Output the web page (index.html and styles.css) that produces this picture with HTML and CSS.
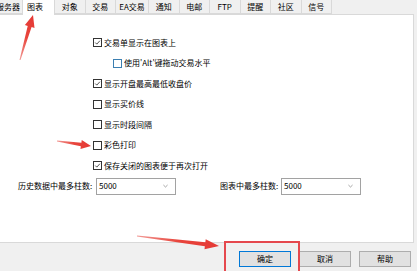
FILE: index.html
```html
<!DOCTYPE html>
<html lang="zh">
<head>
<meta charset="utf-8">
<link rel="stylesheet" href="styles.css">
</head>
<body>
<div class="window">
  <div class="tabs">
    <div class="tab tab-first">服务器</div>
    <div class="tab tab-active">图表</div>
    <div class="tab">对象</div>
    <div class="tab">交易</div>
    <div class="tab tab-wide">EA交易</div>
    <div class="tab">通知</div>
    <div class="tab">电邮</div>
    <div class="tab">FTP</div>
    <div class="tab">提醒</div>
    <div class="tab">社区</div>
    <div class="tab">信号</div>
  </div>
  <div class="panel">
    <div class="row"><span class="cb checked"><svg viewBox="0 0 9 9"><path d="M1.6 4.6 L3.6 6.6 L7.6 2.2" /></svg></span><span class="lbl">交易单显示在图表上</span></div>
    <div class="row row-indent"><span class="cb cb-focus"></span><span class="lbl">使用'Alt'键拖动交易水平</span></div>
    <div class="row"><span class="cb checked"><svg viewBox="0 0 9 9"><path d="M1.6 4.6 L3.6 6.6 L7.6 2.2" /></svg></span><span class="lbl">显示开盘最高最低收盘价</span></div>
    <div class="row"><span class="cb"></span><span class="lbl">显示买价线</span></div>
    <div class="row"><span class="cb"></span><span class="lbl">显示时段间隔</span></div>
    <div class="row"><span class="cb"></span><span class="lbl">彩色打印</span></div>
    <div class="row"><span class="cb checked"><svg viewBox="0 0 9 9"><path d="M1.6 4.6 L3.6 6.6 L7.6 2.2" /></svg></span><span class="lbl">保存关闭的图表便于再次打开</span></div>
    <div class="row row-fields">
      <span class="field-lbl">历史数据中最多柱数:</span>
      <div class="combo"><span>5000</span><svg class="chev" viewBox="0 0 6 4"><path d="M0.5 0.8 L3 3.2 L5.5 0.8"/></svg></div>
      <span class="field-lbl field-lbl2">图表中最多柱数:</span>
      <div class="combo"><span>5000</span><svg class="chev" viewBox="0 0 6 4"><path d="M0.5 0.8 L3 3.2 L5.5 0.8"/></svg></div>
    </div>
  </div>
  <div class="footer">
    <div class="btn btn-default">确定</div>
    <div class="btn">取消</div>
    <div class="btn">帮助</div>
  </div>
  <svg class="annot" viewBox="0 0 417 271" width="417" height="271">
    <defs>
      <linearGradient id="g1" gradientUnits="userSpaceOnUse" x1="20" y1="60" x2="33" y2="15">
        <stop offset="0" stop-color="#f29a96"/><stop offset="0.5" stop-color="#e8453c"/><stop offset="1" stop-color="#e53935"/>
      </linearGradient>
      <linearGradient id="g2" gradientUnits="userSpaceOnUse" x1="57" y1="141" x2="91" y2="146">
        <stop offset="0" stop-color="#f29a96"/><stop offset="0.5" stop-color="#e8453c"/><stop offset="1" stop-color="#e53935"/>
      </linearGradient>
      <linearGradient id="g3" gradientUnits="userSpaceOnUse" x1="137" y1="236" x2="219" y2="246">
        <stop offset="0" stop-color="#f29a96"/><stop offset="0.5" stop-color="#e8453c"/><stop offset="1" stop-color="#e53935"/>
      </linearGradient>
    </defs>
    <polygon fill="url(#g1)" points="20.5,60.1 31.6,27.1 34.5,27.9 33,15 24.9,25.1 27.7,25.9 19.5,59.9"/>
    <polygon fill="url(#g2)" points="56.94,141.4 80.84,146.33 80.45,149.0 91,146 81.75,140.1 81.36,142.77 57.06,140.6"/>
    <polygon fill="url(#g3)" points="136.94,236.5 204.86,246.29 204.5,249.3 219,246 205.7,239.3 205.34,242.31 137.06,235.5"/>
    <rect x="225" y="242" width="74" height="40" fill="none" stroke="#e5484d" stroke-width="2"/>
  </svg>
</div>
</body>
</html>
```

FILE: styles.css
```css
html, body {
  margin: 0;
  padding: 0;
}
body {
  width: 417px;
  height: 271px;
  overflow: hidden;
  background: #f0f0f0;
  font-family: "Noto Sans CJK SC", "Noto Sans", sans-serif;
  font-size: 8px;
  color: #000;
}
.window {
  position: relative;
  width: 417px;
  height: 271px;
  display: flex;
  flex-direction: column;
}
.tabs {
  display: flex;
  align-items: flex-start;
  height: 14px;
  position: relative;
  z-index: 2;
}
.tab {
  box-sizing: border-box;
  width: 30.5px;
  height: 14px;
  border: 1px solid #d9d9d9;
  border-left: none;
  border-top: none;
  background: #f0f0f0;
  display: flex;
  align-items: center;
  justify-content: center;
  line-height: 1;
  white-space: nowrap;
  flex: none;
}
.tab-first {
  width: 31px;
  margin-left: -8px;
  justify-content: flex-end;
  padding-right: 2px;
}
.tab-wide {
  width: 33px;
}
.tab-active {
  width: 32px;
  height: 15px;
  background: #fff;
  border-left: none;
  border-right: 1px solid #d9d9d9;
  border-bottom: none;
  justify-content: flex-start;
  padding-left: 4px;
  padding-bottom: 1px;
}
.panel {
  box-sizing: border-box;
  margin-left: -1px;
  width: 415px;
  height: 229px;
  background: #fff;
  border: 1px solid #d9d9d9;
  padding-top: 17.5px;
  padding-left: 93px;
  display: flex;
  flex-direction: column;
}
.row {
  height: 20.5px;
  display: flex;
  align-items: center;
  flex: none;
}
.row-indent {
  padding-left: 20px;
}
.cb {
  box-sizing: border-box;
  width: 9px;
  height: 9px;
  border: 1px solid #333;
  background: #fff;
  flex: none;
  display: flex;
}
.cb svg {
  width: 7px;
  height: 7px;
  fill: none;
  stroke: #222;
  stroke-width: 1;
}
.cb-focus {
  border-color: #3c7fb1;
}
.lbl {
  margin-left: 2px;
  line-height: 1;
  white-space: nowrap;
}
.row-fields {
  margin-left: -75px;
  height: 20.5px;
}
.field-lbl {
  line-height: 1;
  white-space: nowrap;
  width: 78px;
  flex: none;
}
.field-lbl2 {
  margin-left: 44px;
  width: 61px;
}
.combo {
  box-sizing: border-box;
  width: 80px;
  height: 17px;
  border: 1px solid #a2a2a2;
  background: #fff;
  display: flex;
  align-items: center;
  justify-content: space-between;
  padding: 0 7px 0 2px;
  line-height: 1;
  flex: none;
}
.chev {
  width: 5px;
  height: 4px;
  fill: none;
  stroke: #777;
  stroke-width: 0.8;
}
.footer {
  flex: 1;
  display: flex;
  justify-content: flex-end;
  align-items: flex-start;
  padding-top: 8px;
  padding-right: 6px;
  gap: 8px;
}
.btn {
  box-sizing: border-box;
  width: 52px;
  height: 16px;
  background: #e1e1e1;
  border: 1px solid #adadad;
  display: flex;
  align-items: center;
  justify-content: center;
  line-height: 1;
}
.btn-default {
  border-color: #0078d7;
}
.annot {
  position: absolute;
  left: 0;
  top: 0;
  z-index: 5;
  pointer-events: none;
}
```
